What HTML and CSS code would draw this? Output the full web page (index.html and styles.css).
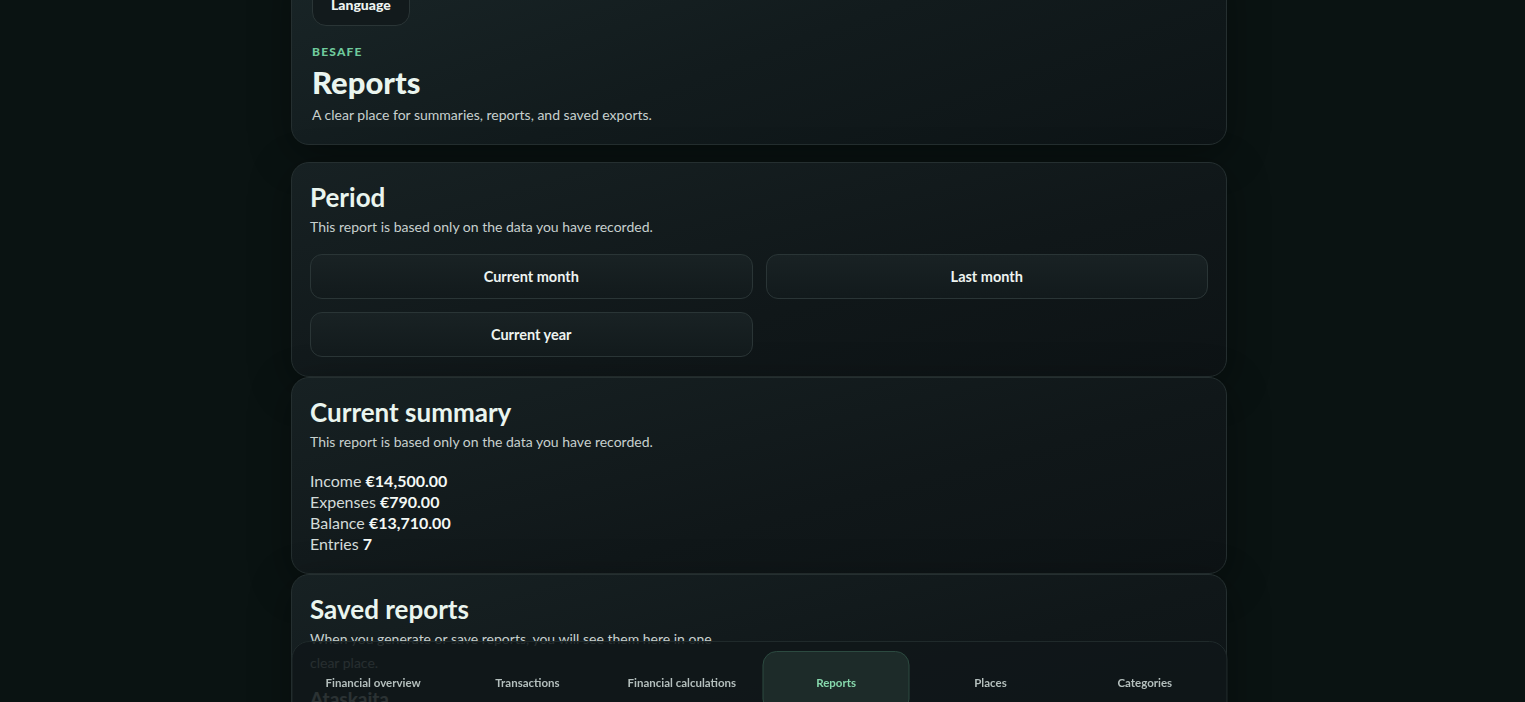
FILE: index.html
```html
<!DOCTYPE html>
<html lang="en">
<head>
    <meta charset="UTF-8">
    <meta name="viewport" content="width=device-width, initial-scale=1.0">
    <title>Reports - BeSafe</title>
    <link rel="stylesheet" href="styles.css">
</head>
<body>
    <main class="page">
        <header class="card hero">
            <button class="lang-btn" type="button">Language</button>
            <p class="eyebrow">BESAFE</p>
            <h1>Reports</h1>
            <p class="muted">A clear place for summaries, reports, and saved exports.</p>
        </header>

        <section class="card">
            <h2>Period</h2>
            <p class="muted">This report is based only on the data you have recorded.</p>
            <div class="period-grid">
                <button class="period-btn" type="button">Current month</button>
                <button class="period-btn" type="button">Last month</button>
                <button class="period-btn" type="button">Current year</button>
            </div>
        </section>

        <section class="card">
            <h2>Current summary</h2>
            <p class="muted">This report is based only on the data you have recorded.</p>
            <ul class="stats">
                <li>Income <strong>€14,500.00</strong></li>
                <li>Expenses <strong>€790.00</strong></li>
                <li>Balance <strong>€13,710.00</strong></li>
                <li>Entries <strong>7</strong></li>
            </ul>
        </section>

        <section class="card">
            <h2>Saved reports</h2>
            <p class="muted wide">When you generate or save reports, you will see them here in one clear place.</p>
            <h3>Ataskaita</h3>
            <p class="muted">No saved reports yet.</p>
        </section>
    </main>

    <nav class="tabbar">
        <a href="#" class="tab">Financial overview</a>
        <a href="#" class="tab">Transactions</a>
        <a href="#" class="tab">Financial calculations</a>
        <a href="#" class="tab active">Reports</a>
        <a href="#" class="tab">Places</a>
        <a href="#" class="tab">Categories</a>
    </nav>
</body>
</html>
```

FILE: styles.css
```css
body {
    font-family: Lato, "Noto Sans", sans-serif;
    background-color: #0a1312;
    color: #e9f2ee;
    margin: 0;
    padding: 0 7px 0 0;
}
.page {
    width: 936px;
    margin: -38px auto 0;
    padding-bottom: 120px;
}
.card {
    background: linear-gradient(165deg, #172123 0%, #101719 60%, #0d1315 100%);
    border: 1px solid #252f30;
    border-radius: 18px;
    padding: 18px 18px 19px;
    box-shadow: 0 10px 40px rgba(0, 0, 0, 0.35);
}
.hero {
    padding: 20px 20px 19px;
    margin-bottom: 17px;
    background: linear-gradient(160deg, #192527 0%, #121b1d 50%, #0d1416 100%);
}
.lang-btn {
    font-family: inherit;
    font-size: 14px;
    font-weight: 900;
    color: #eef4f1;
    background: #121a1c;
    border: 1px solid #2a3536;
    border-radius: 14px;
    padding: 12px 18px;
}
.eyebrow {
    margin: 18px 0 0;
    font-size: 12px;
    line-height: 16px;
    font-weight: 900;
    letter-spacing: 1.2px;
    color: #6fca9c;
}
h1 {
    margin: 3px 0 0;
    font-size: 31px;
    font-weight: 900;
    line-height: 38px;
    color: #eaf5ef;
}
h2 {
    margin: 0;
    font-size: 26px;
    font-weight: bold;
    line-height: 32px;
    color: #eaf5ef;
}
h3 {
    margin: 12px 0 0;
    font-size: 19px;
    font-weight: bold;
    color: #eaf5ef;
}
.muted {
    margin: 4px 0 0;
    font-size: 14px;
    line-height: 20px;
    color: #c7d0ce;
}
.wide {
    max-width: 420px;
    line-height: 24px;
    margin-top: 2px;
}
.period-grid {
    display: grid;
    grid-template-columns: 1fr 1fr;
    gap: 13px;
    margin-top: 17px;
}
.period-btn {
    font-family: inherit;
    height: 45px;
    font-size: 14.5px;
    font-weight: bold;
    color: #eef4f1;
    background: linear-gradient(180deg, #192224 0%, #121a1c 100%);
    border: 1px solid #2a3536;
    border-radius: 12px;
    cursor: pointer;
}
.stats {
    list-style: none;
    margin: 18px 0 0;
    padding: 0;
    font-size: 16px;
    line-height: 21px;
    color: #d3dbd9;
}
.stats strong {
    color: #f3f8f5;
}
.tabbar {
    position: fixed;
    left: 50%;
    bottom: -20px;
    transform: translateX(calc(-50% - 3.5px));
    width: 918px;
    padding: 9px 8px 8px;
    display: grid;
    grid-template-columns: repeat(6, 1fr);
    gap: 8px;
    background: rgba(16, 23, 25, 0.88);
    border: 1px solid #202a2b;
    border-radius: 18px;
}
.tab {
    height: 60px;
    display: flex;
    align-items: center;
    justify-content: center;
    font-size: 11.5px;
    font-weight: bold;
    color: #b4bfbd;
    text-decoration: none;
    border: 1px solid transparent;
    border-radius: 14px;
}
.tab.active {
    color: #86d8ac;
    background: #1d2b29;
    border-color: #2c4a40;
}
```
